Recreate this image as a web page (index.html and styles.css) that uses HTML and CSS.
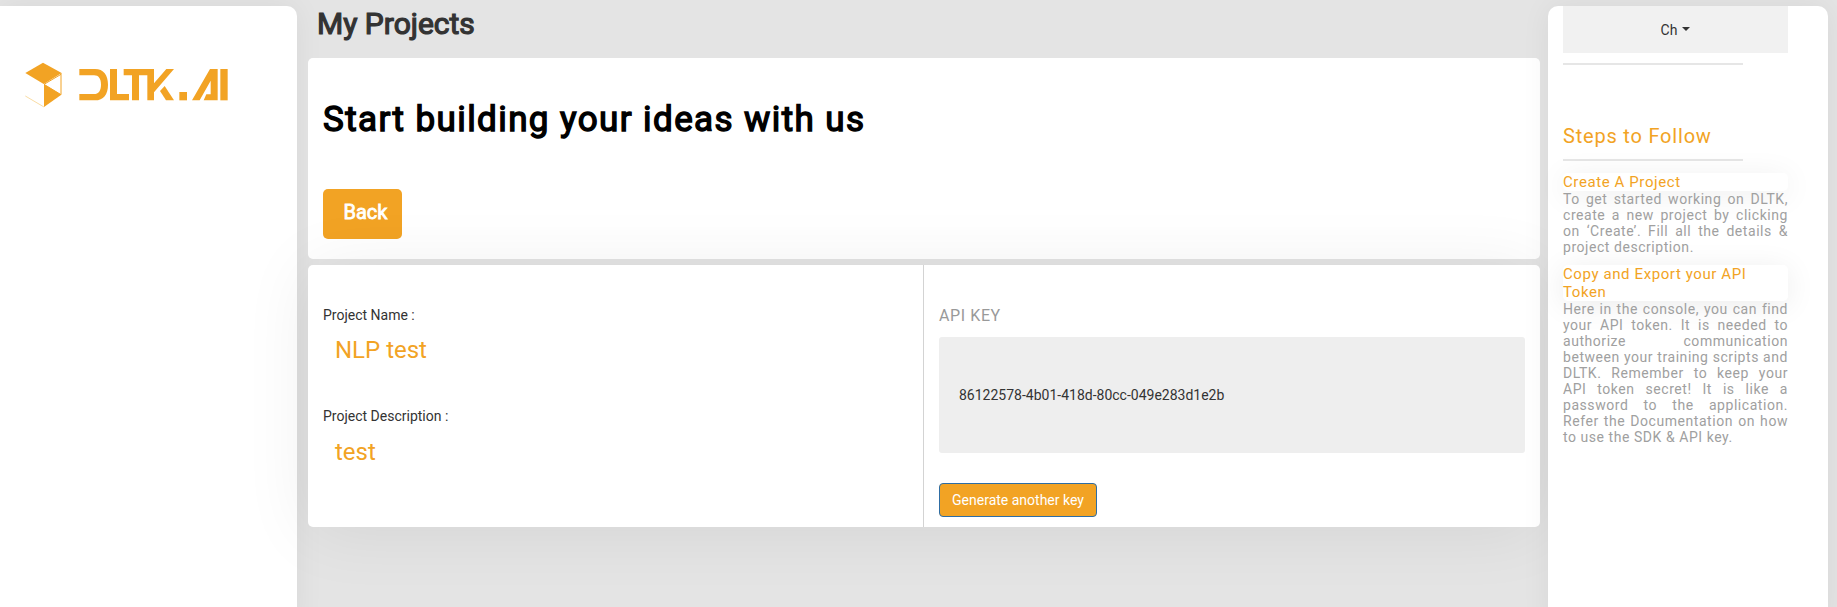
FILE: index.html
```html
<!DOCTYPE html>
<html lang="en">
<head>
<meta charset="utf-8">
<title>My Projects</title>
<link rel="stylesheet" href="styles.css">
</head>
<body>
<div class="layout">
  <aside class="sidebar">
    <svg class="logo" viewBox="75 66 612 138" width="204" height="46" aria-label="DLTK.AI">
      <g fill="#f2a324">
        <path d="M129 68 185 99 131 132 76 99z"/>
        <path d="M132 133 184 164 132 201z"/>
        <path d="M238 87H285C311 87 324 105 324 134S311 181 285 181H238V162H282C296 162 303 152 303 134S296 106 282 106H238z"/>
        <path d="M330 87H351V162H387V181H330z"/>
        <path d="M371 87H462V130L499 87H522L462 157V181H442V106H417V181H396V106H371z"/>
        <path d="M494 138 522 181H498L480 153z"/>
        <path d="M538 156H561V181H538z"/>
        <path d="M630 87H653V181H611L619 163H632V122L599 181H576z"/>
        <path d="M661 87H683V181H661z"/>
      </g>
      <path d="M183 99V164M132 133 183 103M132 133 183 164" fill="none" stroke="#f2a324" stroke-width="3"/>
      <path d="M76 168 132 201" fill="none" stroke="#f8d591" stroke-width="2.5"/>
    </svg>
  </aside>
  <main class="content">
    <h1 class="page-title">My Projects</h1>
    <section class="card intro">
      <h2 class="intro-title">Start building your ideas with us</h2>
      <button class="back">Back</button>
    </section>
    <section class="card project">
      <div class="details">
        <div class="label">Project Name :</div>
        <div class="value">NLP test</div>
        <div class="label label-description">Project Description :</div>
        <div class="value">test</div>
      </div>
      <div class="api">
        <div class="api-title">API KEY</div>
        <div class="api-key">86122578-4b01-418d-80cc-049e283d1e2b</div>
        <button class="generate">Generate another key</button>
      </div>
    </section>
  </main>
  <aside class="steps">
    <div class="user">Ch<span class="caret"></span></div>
    <hr class="rule">
    <h3 class="steps-title">Steps to Follow</h3>
    <hr class="rule rule-title">
    <h4 class="step-title">Create A Project</h4>
    <p class="step-text">To get started working on DLTK, create a new project by clicking on ‘Create’. Fill all the details &amp; project description.</p>
    <h4 class="step-title">Copy and Export your API Token</h4>
    <p class="step-text">Here in the console, you can find your API token. It is needed to authorize communication between your training scripts and DLTK. Remember to keep your API token secret! It is like a password to the application. Refer the Documentation on how to use the SDK &amp; API key.</p>
  </aside>
</div>
</body>
</html>
```
FILE: styles.css
```css
* { box-sizing: border-box; }
body {
  margin: 0;
  background: #e4e4e4;
  color: #333;
  font: 14px/20px Roboto, sans-serif;
  overflow: hidden;
}
h1, h2, h3, h4, p, hr { margin: 0; font-weight: 400; }
button { font-family: inherit; }
.layout { display: flex; height: 607px; padding-top: 6px; }
.sidebar {
  width: 297px;
  height: 620px;
  padding: 56px 0 0 25px;
  background: #fff;
  border-radius: 0 10px 0 0;
  box-shadow: 0 0 30px rgba(0, 0, 0, .06);
}
.logo { display: block; }
.content { width: 1232px; margin: 0 8px 0 11px; }
.page-title {
  height: 52px;
  padding: 1px 0 0 9px;
  font-size: 30px;
  line-height: 34px;
  -webkit-text-stroke: 1.2px #333;
}
.card {
  background: #fff;
  border-radius: 5px;
}
.intro { height: 201px; padding: 41px 15px 0; }
.intro-title {
  color: #000;
  font-size: 35px;
  line-height: 42px;
  letter-spacing: 1.4px;
  -webkit-text-stroke: 1.4px #000;
}
.back {
  display: block;
  width: 79px;
  height: 50px;
  margin-top: 48px;
  padding: 0 14px 5px 20px;
  border: 0;
  border-radius: 5px;
  background: #f2a324;
  color: #fff;
  font-size: 20px;
  -webkit-text-stroke: .8px #fff;
}
.project {
  display: flex;
  height: 262px;
  margin-top: 6px;
  box-shadow: 0 4px 70px rgba(0, 0, 0, .07);
}
.details { width: 616px; padding: 40px 15px 0; border-right: 1px solid #d3d3d3; }
.label-description { margin-top: 39px; }
.value {
  margin-top: 8px;
  padding-left: 12px;
  color: #f2a324;
  font-size: 24px;
  line-height: 34px;
}
.label-description + .value { margin-top: 9px; }
.api { width: 616px; padding: 41px 15px 0; }
.api-title { color: #999; font-size: 16px; letter-spacing: .6px; }
.api-key {
  height: 116px;
  margin-top: 11px;
  padding: 48px 20px;
  border-radius: 3px;
  background: #eee;
}
.generate {
  display: block;
  height: 34px;
  width: 158px;
  margin-top: 30px;
  padding: 0;
  border: 1px solid #2e6da4;
  border-radius: 4px;
  background: #f2a324;
  color: #fff;
  font-size: 14px;
}
.steps {
  width: 280px;
  height: 620px;
  padding: 0 40px 0 15px;
  background: #fff;
  border-radius: 10px 10px 0 0;
  box-shadow: 0 0 30px rgba(0, 0, 0, .06);
}
.user {
  display: flex;
  justify-content: center;
  align-items: center;
  height: 47px;
  background: #f1f1f1;
}
.caret {
  margin: -2px 0 0 5px;
  border-top: 4px solid #333;
  border-left: 4px solid transparent;
  border-right: 4px solid transparent;
}
.rule { width: 180px; height: 2px; margin-top: 10px; border: 0; background: #e6e6e6; }
.steps-title {
  margin-top: 60px;
  color: #f2a324;
  font-size: 20px;
  line-height: 22px;
  letter-spacing: .8px;
}
.rule-title { margin-top: 12px; }
.step-title {
  margin-top: 12px;
  border-radius: 5px;
  background: #fff;
  box-shadow: 0 4px 30px rgba(0, 0, 0, .08);
  color: #f2a324;
  font-size: 15px;
  line-height: 18px;
  letter-spacing: .6px;
}
.step-text {
  color: #a0a0a0;
  line-height: 16px;
  letter-spacing: .55px;
  text-align: justify;
}
.step-text + .step-title { margin-top: 10px; }
```
